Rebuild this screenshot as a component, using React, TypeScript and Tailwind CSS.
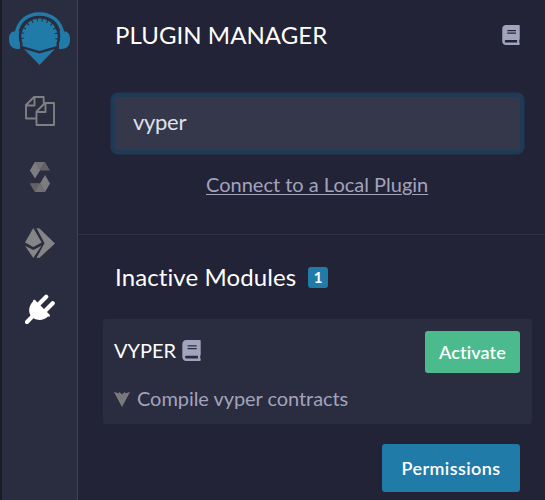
import { FaBook } from "react-icons/fa";

function RemixLogo() {
  return (
    <svg className="block h-[53px] w-[62px]" viewBox="0 0 62 53" fill="#217ba9">
      <path d="M11 19.3V37H8.5C3 37 0 33 0 27.5C0 22 2 19.3 6.5 19.3ZM50 19.3V37H52.5C58.5 37 61 33 61 27.5C61 22 59 19.3 54.5 19.3Z" />
      <path d="M7.3 22C9 9.5 18 1.9 30.5 1.9S52 9.5 53.7 22" fill="none" stroke="#217ba9" strokeWidth="3.5" />
      <circle cx="30.5" cy="24.6" r="20.7" fill="#2a2c3f" />
      <path d="M15.2 30.4A16.3 16.3 0 1 1 45.8 30.4" fill="none" stroke="#217ba9" strokeWidth="3.8" strokeDasharray="3.9 1" />
      <path d="M14.9 24.8A15.6 15.6 0 0 1 46.1 24.8L47.8 34L30.5 39L13.2 34Z" />
      <path d="M15 37L30.5 41.4L46 37L30.5 53Z" />
    </svg>
  );
}

function FilesIcon() {
  return (
    <svg className="block size-[30px]" viewBox="0 0 30 30" fill="none" stroke="#807f82" strokeWidth="1.9" strokeLinejoin="round">
      <path d="M11.5 22.5H1V9L9 1H18.7V7.5M9.5 1V9.5H1" />
      <path d="M11.5 15.5L20 7H29V29H11.5ZM20.5 7V16H11.5" />
    </svg>
  );
}

function SolidityIcon() {
  return (
    <svg className="block h-[30px] w-5" viewBox="0 0 20 30">
      <path d="M5 0H15L10 8.5H0Z" fill="#727275" />
      <path d="M15 0L20 8.5H10Z" fill="#626266" />
      <path d="M0 8.5L5 0L10 8.5L5 16.5Z" fill="#7d7d80" />
      <path d="M5 30H15L10 21.5H0Z" fill="#727275" />
      <path d="M5 30L10 21.5H0Z" fill="#626266" />
      <path d="M20 21.5L15 30L10 21.5L15 13Z" fill="#7d7d80" />
    </svg>
  );
}

function DeployIcon() {
  return (
    <svg className="block size-[30px]" viewBox="0 0 30 30" fill="#858487">
      <path d="M8.3 0L16.7 14.5L8.3 19L0 14.5Z" />
      <path d="M0 17.7L8.3 22L16.5 17.7L8.3 30Z" />
      <path d="M11.5 0L14.5 0.5L30 15.5L14.5 29.8L11.5 30L19.5 15.2Z" />
    </svg>
  );
}

function PlugIcon() {
  return (
    <svg className="block size-[30px]" viewBox="0 0 30 30" fill="#fff">
      <path d="M10 6L24.5 20.5C25.5 22 24.5 23.1 23 22.5C19 26.5 13 27 8.5 24.3L2 31L-1 28L5.5 21.5C3 17 4 11.5 8 7.5C7.7 6.3 8.8 5 10 6Z" />
      <path d="M13.5 10.5L21.2 2.8M20 17L27.7 9.3" stroke="#fff" strokeWidth="4.2" strokeLinecap="round" />
    </svg>
  );
}

function VyperIcon() {
  return (
    <svg className="block h-[15px] w-4" viewBox="0 0 16 15" fill="#7b7b7d">
      <path d="M0 0L4.5 1.2L5.5 0L8 2.5L10.5 0L11.5 1.2L16 0L8 15Z" />
      <path d="M4.5 1L8 8L11.5 1" fill="none" stroke="#66666b" strokeWidth=".5" />
    </svg>
  );
}

export default function App() {
  return (
    <div className="flex h-[500px] w-[545px] overflow-hidden bg-[#222336] font-['Lato',sans-serif] text-white">
      <nav className="flex w-[78px] shrink-0 flex-col items-center border-r border-l-2 border-r-[#3f4055] border-l-[#1b1c24] bg-[#2a2c3f] pt-3 pl-px">
        <RemixLogo />
        <div className="mt-[31px] flex flex-col items-center gap-9">
          <FilesIcon />
          <SolidityIcon />
          <DeployIcon />
          <PlugIcon />
        </div>
      </nav>
      <main className="min-w-0 flex-1">
        <section className="h-[235px] border-b border-[#303144] pt-5">
          <header className="flex h-[30px] items-center justify-between pr-[25px] pl-[37px]">
            <h1 className="text-2xl leading-[30px] tracking-[0.05px] whitespace-nowrap">PLUGIN MANAGER</h1>
            <FaBook className="h-5 w-[18px] text-[#a2a3bd]" />
          </header>
          <input
            type="text"
            defaultValue="vyper"
            className="mt-[47px] ml-[37px] block h-[53px] w-[405px] rounded-[3px] bg-[#35374b] px-[18px] pb-1 text-[22px] tracking-[-0.3px] text-[#dfe1ea] ring-[4.5px] ring-[#1f3a54] outline-none"
          />
          <div className="mt-5 ml-32">
            <a className="text-xl leading-7 tracking-[0px] whitespace-nowrap text-[#a2a3bd] underline decoration-1 underline-offset-2">Connect to a Local Plugin</a>
          </div>
        </section>
        <section className="pt-[27px]">
          <div className="flex h-[30px] items-center gap-3 pl-[37px]">
            <h2 className="pb-px text-2xl leading-[30px] tracking-[0.1px] whitespace-nowrap">Inactive Modules</h2>
            <span className="flex h-[21px] w-5 items-center justify-center rounded-[3px] bg-[#217ba9] text-[15px] font-bold">1</span>
          </div>
          <article className="mt-[27px] ml-[25px] h-[105px] w-[429px] rounded-[3px] bg-[#2a2c3f] pt-3 pr-3 pl-[11px]">
            <div className="flex h-[42px] items-center">
              <h3 className="pb-1 text-xl tracking-[0px] whitespace-nowrap">VYPER</h3>
              <FaBook className="mb-[3px] ml-1.5 h-[21px] w-[19px] text-[#a2a3bd]" />
              <button className="ml-auto h-[42px] w-[95px] rounded-[3px] bg-[#4bbb8d] pb-px text-lg font-semibold tracking-[0.1px] whitespace-nowrap">Activate</button>
            </div>
            <div className="mt-[11px] flex h-7 items-center gap-[7px] text-xl tracking-[-0.06px] whitespace-nowrap text-[#a2a3bd]">
              <div className="pt-0.5">
                <VyperIcon />
              </div>
              <span className="pb-px">Compile vyper contracts</span>
            </div>
          </article>
          <button className="mt-5 ml-[304px] block h-12 w-[138px] rounded-[3px] bg-[#217ba9] pb-px text-lg font-semibold tracking-[0.4px] whitespace-nowrap">Permissions</button>
        </section>
      </main>
    </div>
  );
}
